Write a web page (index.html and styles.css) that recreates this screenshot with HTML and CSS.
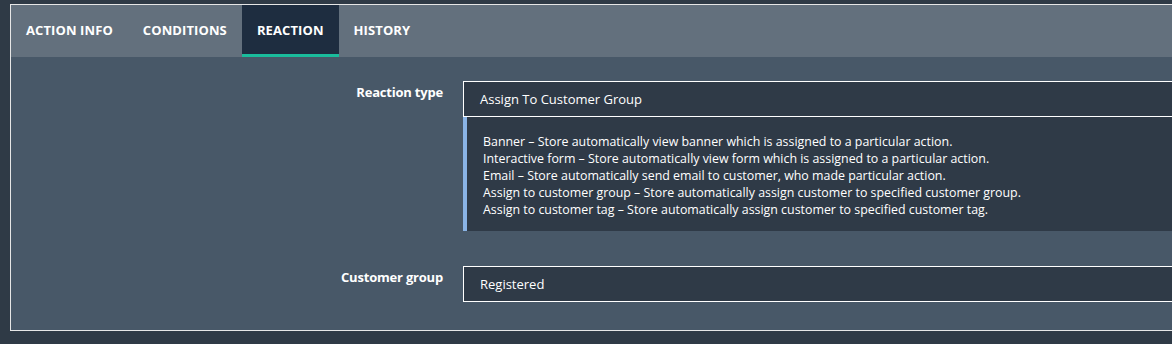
FILE: index.html
```html
<!DOCTYPE html>
<html lang="en">
<head>
    <meta charset="UTF-8">
    <title>Reaction</title>
    <link rel="stylesheet" href="styles.css">
</head>
<body>
    <div class="panel">
        <!-- Tabs -->
        <div class="tabs">
            <div class="tab">Action info</div>
            <div class="tab">Conditions</div>
            <div class="tab active">Reaction</div>
            <div class="tab">History</div>
        </div>

        <div class="panel-body">
            <div class="field">
                <label class="field-label">Reaction type</label>
                <div class="field-control">
                    <div class="input">Assign To Customer Group</div>
                    <div class="note">
                        Banner – Store automatically view banner which is assigned to a particular action.<br>
                        Interactive form – Store automatically view form which is assigned to a particular action.<br>
                        Email – Store automatically send email to customer, who made particular action.<br>
                        Assign to customer group – Store automatically assign customer to specified customer group.<br>
                        Assign to customer tag – Store automatically assign customer to specified customer tag.
                    </div>
                </div>
            </div>

            <div class="field">
                <label class="field-label">Customer group</label>
                <div class="field-control">
                    <div class="input">Registered</div>
                </div>
            </div>
        </div>
    </div>
</body>
</html>
```

FILE: styles.css
```css
body {
    margin: 0;
    background: #2f3a46;
    font-family: "Open Sans", Arial, sans-serif;
    color: #fff;
    overflow: hidden;
    height: 344px;
}

.panel {
    margin: 4px 0 0 10px;
    width: 1200px;
    border: 1px solid #e6e6e6;
    background: #485868;
}

/* Tabs */
.tabs {
    display: flex;
    background: #63707d;
    height: 52px;
}

.tab {
    padding: 1px 15px 0 15px;
    display: flex;
    align-items: center;
    font-size: 13px;
    font-weight: bold;
    text-transform: uppercase;
    letter-spacing: 0.1px;
    border-bottom: 3px solid transparent;
    box-sizing: border-box;
}

.tab.active {
    background: #1e2d40;
    border-bottom-color: #1abc9c;
}

/* Form */
.panel-body {
    padding: 24px 0 28px 0;
    display: flex;
    flex-direction: column;
    gap: 35px;
}

.field {
    display: grid;
    grid-template-columns: 432px 1fr;
    column-gap: 20px;
}

.field-label {
    text-align: right;
    font-size: 13px;
    font-weight: bold;
    padding-top: 2px;
    letter-spacing: -0.2px;
}

.input {
    height: 36px;
    box-sizing: border-box;
    border: 1px solid #fff;
    background: #2f3a47;
    padding: 0 16px;
    display: flex;
    align-items: center;
    font-size: 13px;
}

.note {
    background: #2f3a47;
    border-left: 4px solid #8ab4e6;
    padding: 16px 16px 13px 16px;
    font-size: 12.4px;
    line-height: 17px;
}
```
